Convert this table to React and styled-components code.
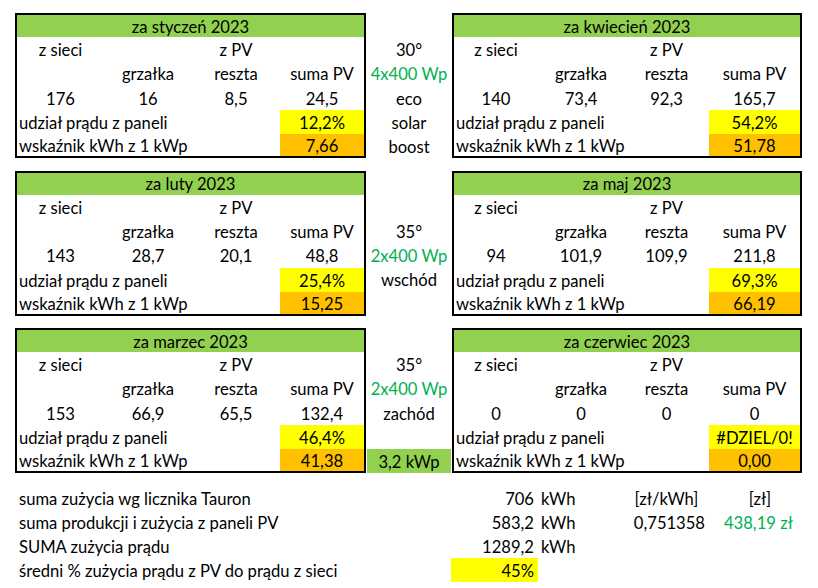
import React from "react";
import styled, { createGlobalStyle } from "styled-components";

const Global = createGlobalStyle`
  html, body { margin: 0; padding: 0; background: #fff; }
  body { font-family: Lato, "Open Sans", sans-serif; color: #000; }
`;

const Page = styled.div`
  width: 818px;
  height: 588px;
  box-sizing: border-box;
  padding: 13px 0 0 15px;
  display: flex;
  flex-direction: column;
  gap: 12.5px;
  font-family: Lato, "Open Sans", sans-serif;
  font-size: 16.6px;
  color: #000;
  overflow: hidden;
`;

const Band = styled.div`
  display: grid;
  grid-template-columns: 351px 86px 350px;
  height: 145px;
`;

const Block = styled.div`
  box-sizing: border-box;
  border: 2px solid #000;
  display: grid;
  grid-template-columns: ${(p) => p.$cols};
  grid-template-rows: 22px 24px 24.5px 24.5px 24px 22px;
`;

const Title = styled.div`
  grid-column: 1 / -1;
  background: #92d050;
  display: flex;
  align-items: center;
  justify-content: center;
  padding-top: 1px;
`;

const Cell = styled.div`
  display: flex;
  align-items: center;
  justify-content: center;
  padding-top: 2px;
  white-space: nowrap;
  background: ${(p) => p.$bg || "transparent"};
`;

const Label = styled(Cell)`
  grid-column: span 3;
  justify-content: flex-start;
  padding-left: 2px;
`;

const Side = styled.div`
  display: grid;
  grid-template-rows: repeat(6, 1fr);
`;

const SideCell = styled(Cell)`
  color: ${(p) => (p.$green ? "#00b050" : "#000")};
  background: ${(p) => (p.$fill ? "#92d050" : "transparent")};
  margin: ${(p) => (p.$fill ? "0 1px 0 1px" : "0")};
`;

const Summary = styled.div`
  display: grid;
  grid-template-columns: 436px 87px 86px 85px 102px;
  grid-auto-rows: 24.2px;
`;

const SumCell = styled.div`
  display: flex;
  align-items: center;
  padding-top: 2px;
  white-space: nowrap;
  justify-content: ${(p) => p.$align || "flex-start"};
  padding-left: ${(p) => p.$pl || 0}px;
  padding-right: ${(p) => p.$pr || 0}px;
  color: ${(p) => (p.$green ? "#00b050" : "#000")};
  background: ${(p) => p.$bg || "transparent"};
`;

const YELLOW = "#ffff00";
const ORANGE = "#ffc000";

const LEFT_COLS = "87px 88px 88px 1fr";
const RIGHT_COLS = "84px 86px 85px 1fr";

function MonthBlock({ cols, title, data }) {
  return (
    <Block $cols={cols}>
      <Title>{title}</Title>
      <Cell>z sieci</Cell>
      <Cell />
      <Cell>z PV</Cell>
      <Cell />
      <Cell />
      <Cell>grzałka</Cell>
      <Cell>reszta</Cell>
      <Cell>suma PV</Cell>
      {data.values.map((v, i) => (
        <Cell key={i}>{v}</Cell>
      ))}
      <Label>udział prądu z paneli</Label>
      <Cell $bg={YELLOW}>{data.share}</Cell>
      <Label>wskaźnik kWh z 1 kWp</Label>
      <Cell $bg={ORANGE}>{data.ratio}</Cell>
    </Block>
  );
}

function SideColumn({ items }) {
  return (
    <Side>
      {items.map((it, i) => (
        <SideCell key={i} $green={it.green} $fill={it.fill}>
          {it.text}
        </SideCell>
      ))}
    </Side>
  );
}

const bands = [
  {
    left: { title: "za styczeń 2023", values: ["176", "16", "8,5", "24,5"], share: "12,2%", ratio: "7,66" },
    side: [{}, { text: "30°" }, { text: "4x400 Wp", green: true }, { text: "eco" }, { text: "solar" }, { text: "boost" }],
    right: { title: "za kwiecień 2023", values: ["140", "73,4", "92,3", "165,7"], share: "54,2%", ratio: "51,78" },
  },
  {
    left: { title: "za luty 2023", values: ["143", "28,7", "20,1", "48,8"], share: "25,4%", ratio: "15,25" },
    side: [{}, {}, { text: "35°" }, { text: "2x400 Wp", green: true }, { text: "wschód" }, {}],
    right: { title: "za maj 2023", values: ["94", "101,9", "109,9", "211,8"], share: "69,3%", ratio: "66,19" },
  },
  {
    left: { title: "za marzec 2023", values: ["153", "66,9", "65,5", "132,4"], share: "46,4%", ratio: "41,38" },
    side: [{}, { text: "35°" }, { text: "2x400 Wp", green: true }, { text: "zachód" }, {}, { text: "3,2 kWp", fill: true }],
    right: { title: "za czerwiec 2023", values: ["0", "0", "0", "0"], share: "#DZIEL/0!", ratio: "0,00" },
  },
];

export default function App() {
  return (
    <>
      <Global />
      <Page>
        {bands.map((b, i) => (
          <Band key={i}>
            <MonthBlock cols={LEFT_COLS} title={b.left.title} data={b.left} />
            <SideColumn items={b.side} />
            <MonthBlock cols={RIGHT_COLS} title={b.right.title} data={b.right} />
          </Band>
        ))}
        <Summary>
          <SumCell $pl={4}>suma zużycia wg licznika Tauron</SumCell>
          <SumCell $align="flex-end" $pr={4}>706</SumCell>
          <SumCell $pl={3}>kWh</SumCell>
          <SumCell $align="center">[zł/kWh]</SumCell>
          <SumCell $align="center">[zł]</SumCell>

          <SumCell $pl={4}>suma produkcji i zużycia z paneli PV</SumCell>
          <SumCell $align="flex-end" $pr={4}>583,2</SumCell>
          <SumCell $pl={3}>kWh</SumCell>
          <SumCell $align="flex-end" $pr={4}>0,751358</SumCell>
          <SumCell $pl={15} $green>438,19 zł</SumCell>

          <SumCell $pl={4}>SUMA zużycia prądu</SumCell>
          <SumCell $align="flex-end" $pr={4}>1289,2</SumCell>
          <SumCell $pl={3}>kWh</SumCell>
          <SumCell />
          <SumCell />

          <SumCell $pl={4}>średni % zużycia prądu z PV do prądu z sieci</SumCell>
          <SumCell $align="flex-end" $pr={4} $bg={YELLOW}>45%</SumCell>
          <SumCell />
          <SumCell />
          <SumCell />
        </Summary>
      </Page>
    </>
  );
}
